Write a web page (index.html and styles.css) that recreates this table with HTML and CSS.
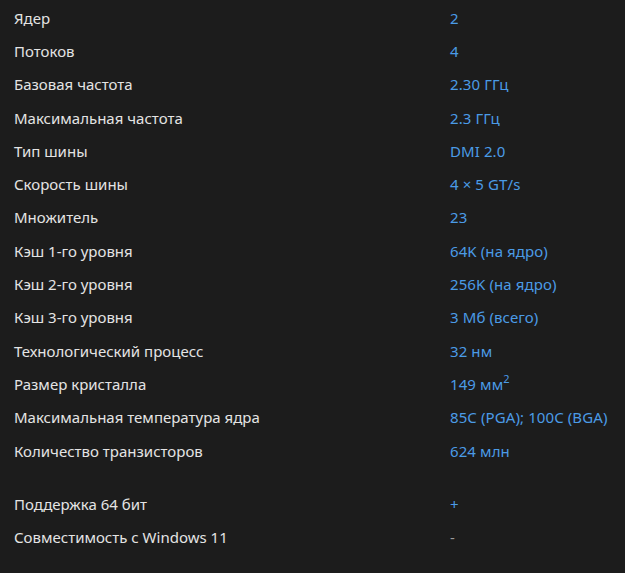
FILE: index.html
```html
<!DOCTYPE html>
<html lang="ru">
<head>
<meta charset="utf-8">
<link rel="stylesheet" href="styles.css">
</head>
<body>
<div class="specs">
  <div class="group">
    <div class="row"><span class="label">Ядер</span><span class="value">2</span></div>
    <div class="row"><span class="label">Потоков</span><span class="value">4</span></div>
    <div class="row"><span class="label">Базовая частота</span><span class="value">2.30 ГГц</span></div>
    <div class="row"><span class="label">Максимальная частота</span><span class="value">2.3 ГГц</span></div>
    <div class="row"><span class="label">Тип шины</span><span class="value">DMI 2.0</span></div>
    <div class="row"><span class="label">Скорость шины</span><span class="value">4 × 5 GT/s</span></div>
    <div class="row"><span class="label">Множитель</span><span class="value">23</span></div>
    <div class="row"><span class="label">Кэш 1-го уровня</span><span class="value">64K (на ядро)</span></div>
    <div class="row"><span class="label">Кэш 2-го уровня</span><span class="value">256K (на ядро)</span></div>
    <div class="row"><span class="label">Кэш 3-го уровня</span><span class="value">3 Мб (всего)</span></div>
    <div class="row"><span class="label">Технологический процесс</span><span class="value">32 нм</span></div>
    <div class="row"><span class="label">Размер кристалла</span><span class="value">149 мм<sup>2</sup></span></div>
    <div class="row"><span class="label">Максимальная температура ядра</span><span class="value">85C (PGA); 100C (BGA)</span></div>
    <div class="row"><span class="label">Количество транзисторов</span><span class="value">624 млн</span></div>
  </div>
  <div class="group">
    <div class="row"><span class="label">Поддержка 64 бит</span><span class="value">+</span></div>
    <div class="row"><span class="label">Совместимость с Windows 11</span><span class="value muted">-</span></div>
  </div>
</div>
</body>
</html>
```
FILE: styles.css
```css
html, body {
  margin: 0;
  padding: 0;
  background: #1c1c1c;
}
body {
  font-family: "Noto Sans", "Open Sans", sans-serif;
  font-size: 15px;
  color: #e4e4e4;
}
.specs {
  display: flex;
  flex-direction: column;
  gap: 20px;
  padding: 1px 0 0 14px;
}
.row {
  display: grid;
  grid-template-columns: 436px 1fr;
  height: 33.3px;
  align-items: center;
}
.value {
  color: #4b9be6;
  letter-spacing: 0.1px;
}
.value.muted {
  color: #9a9a9a;
}
.value sup {
  font-size: 11px;
  line-height: 0;
  vertical-align: 7px;
}
```
